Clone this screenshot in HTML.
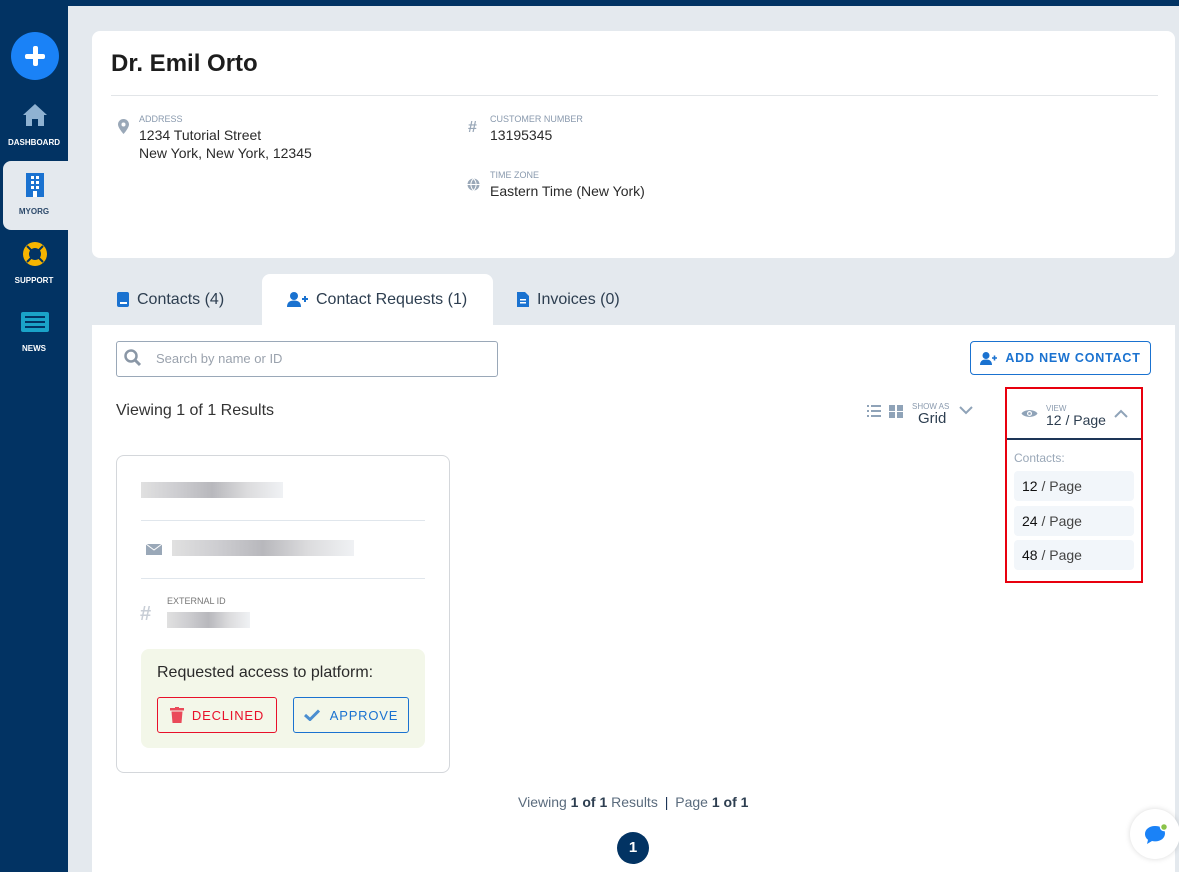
<!DOCTYPE html>
<html><head><meta charset="utf-8"><style>
*{box-sizing:border-box;margin:0;padding:0}
body{width:1179px;height:872px;overflow:hidden;background:#e4e9ee;font-family:"Liberation Sans",sans-serif;position:relative;color:#222}
.abs{position:absolute}
.side{left:0;top:0;width:68px;height:872px;background:#023363}
.top{left:0;top:0;width:1179px;height:6px;background:#023363}
.nav{position:absolute;left:0;width:68px;text-align:center;color:#fff;font-size:8px;font-weight:bold}
.lbl{font-size:9px;color:#8a9aae;text-transform:uppercase}
.val{font-size:14px;color:#2a2a2a;line-height:18px}
.tab{position:absolute;top:274px;height:51px;font-size:16px;color:#2d3e50;display:flex;align-items:center;gap:8px}
.blur{position:absolute;background:linear-gradient(90deg,#ddd,#c8c8cc,#b0b0b5,#d8d8da,#eef0f3);opacity:.9}
.opt{position:absolute;left:1014px;width:120px;height:30px;background:#f2f6fa;border-radius:4px;font-size:14px;padding:7px 8px;color:#444}
.opt b{font-weight:normal;color:#111}
</style></head><body>
<div class="abs side"></div>
<div class="abs top"></div>
<div class="abs" style="left:11px;top:32px;width:48px;height:48px;border-radius:50%;background:#1a82f7"></div>
<div class="abs" style="left:25px;top:54px;width:20px;height:5px;background:#fff;border-radius:2px"></div>
<div class="abs" style="left:33px;top:46px;width:5px;height:20px;background:#fff;border-radius:2px"></div>
<svg class="abs" style="left:22px;top:103px" width="26" height="24" viewBox="0 0 26 24"><path d="M13 1 L1 12 L4 12 L4 23 L10 23 L10 16 L16 16 L16 23 L22 23 L22 12 L25 12Z" fill="#8fb2d2"/></svg>
<div class="nav" style="top:138px">DASHBOARD</div>
<div class="abs" style="left:3px;top:161px;width:65px;height:69px;background:#e4e9ee;border-radius:8px 0 0 8px"></div>
<svg class="abs" style="left:25px;top:173px" width="20" height="24"><rect x="1" y="0" width="18" height="24" fill="#1a72d0"/><g fill="#fff"><rect x="6" y="3" width="3" height="3"/><rect x="11" y="3" width="3" height="3"/><rect x="6" y="8" width="3" height="3"/><rect x="11" y="8" width="3" height="3"/><rect x="6" y="13" width="3" height="3"/><rect x="11" y="13" width="3" height="3"/><rect x="8" y="18" width="4" height="6"/></g></svg>
<div class="nav" style="top:207px;color:#2d4a6b">MYORG</div>
<svg class="abs" style="left:23px;top:242px" width="24" height="24"><circle cx="12" cy="12" r="12" fill="#f7b500"/><circle cx="12" cy="12" r="6" fill="#023363"/><g stroke="#023363" stroke-width="2"><path d="M4 4L8 8M20 4L16 8M4 20L8 16M20 20L16 16"/></g></svg>
<div class="nav" style="top:276px">SUPPORT</div>
<svg class="abs" style="left:21px;top:312px" width="28" height="20"><rect x="0" y="0" width="28" height="20" rx="2" fill="#1aa3c8"/><g fill="#023363"><rect x="4" y="4" width="20" height="2"/><rect x="4" y="9" width="20" height="2"/><rect x="4" y="14" width="20" height="2"/></g></svg>
<div class="nav" style="top:344px">NEWS</div>

<div class="abs" style="left:92px;top:31px;width:1083px;height:227px;background:#fff;border-radius:8px"></div>
<div class="abs" style="left:111px;top:50px;font-size:24px;color:#1d1d1d;font-weight:bold">Dr. Emil Orto</div>
<div class="abs" style="left:111px;top:95px;width:1047px;height:1px;background:#e2e5e8"></div>
<svg class="abs" style="left:118px;top:119px" width="11" height="15" viewBox="0 0 11 15"><path d="M5.5 0C2.5 0 0 2.4 0 5.4 0 9 5.5 15 5.5 15S11 9 11 5.4C11 2.4 8.5 0 5.5 0Z" fill="#9aa8b8"/><circle cx="5.5" cy="5.5" r="2" fill="#fff"/></svg>
<div class="abs lbl" style="left:139px;top:114px">Address</div>
<div class="abs val" style="left:139px;top:126px">1234 Tutorial Street<br>New York, New York, 12345</div>
<div class="abs" style="left:468px;top:119px;font-size:16px;color:#9aa8b8;font-weight:bold">#</div>
<div class="abs lbl" style="left:490px;top:114px">Customer Number</div>
<div class="abs val" style="left:490px;top:126px">13195345</div>
<svg class="abs" style="left:467px;top:178px" width="13" height="13"><circle cx="6.5" cy="6.5" r="6" fill="#9aa8b8"/><path d="M0.5 6.5H12.5M6.5 0.5C3 4 3 9 6.5 12.5M6.5 0.5C10 4 10 9 6.5 12.5" stroke="#fff" fill="none" stroke-width="1"/></svg>
<div class="abs lbl" style="left:490px;top:170px">Time Zone</div>
<div class="abs val" style="left:490px;top:182px">Eastern Time (New York)</div>

<div class="tab" style="left:117px"><svg width="12" height="15"><rect width="12" height="15" rx="2" fill="#1a72d0"/><rect x="3" y="10" width="7" height="2" fill="#fff"/></svg>Contacts (4)</div>
<div class="abs" style="left:262px;top:274px;width:231px;height:52px;background:#fff;border-radius:8px 8px 0 0"></div>
<div class="tab" style="left:287px"><svg width="21" height="15"><circle cx="7" cy="4" r="4" fill="#1a72d0"/><path d="M0 15C0 10 3 8.5 7 8.5S14 10 14 15Z" fill="#1a72d0"/><path d="M15 7H21M18 4V10" stroke="#1a72d0" stroke-width="2"/></svg>Contact Requests (1)</div>
<div class="tab" style="left:517px"><svg width="12" height="15"><path d="M0 0H8L12 4V15H0Z" fill="#1a72d0"/><g fill="#fff"><rect x="3" y="7" width="6" height="1.5"/><rect x="3" y="10" width="6" height="1.5"/></g></svg>Invoices (0)</div>

<div class="abs" style="left:92px;top:325px;width:1083px;height:547px;background:#fff"></div>
<div class="abs" style="left:116px;top:341px;width:382px;height:36px;border:1px solid #9aa8b8;border-radius:3px"></div>
<svg class="abs" style="left:124px;top:349px" width="18" height="18"><circle cx="7" cy="7" r="5.5" stroke="#8a97a6" stroke-width="2.5" fill="none"/><path d="M11 11L16 16" stroke="#8a97a6" stroke-width="3"/></svg>
<div class="abs" style="left:156px;top:351px;font-size:13px;color:#9aa2ad">Search by name or ID</div>
<div class="abs" style="left:970px;top:341px;width:181px;height:34px;border:1px solid #1a72d0;border-radius:4px;display:flex;align-items:center;justify-content:center;gap:8px;font-size:12.5px;font-weight:bold;color:#1a72d0;letter-spacing:.8px"><svg width="17" height="13"><circle cx="6" cy="3.5" r="3.5" fill="#1a72d0"/><path d="M0 13C0 9 2.5 7.5 6 7.5S12 9 12 13Z" fill="#1a72d0"/><path d="M12 6H17M14.5 3.5V8.5" stroke="#1a72d0" stroke-width="1.6"/></svg>ADD NEW CONTACT</div>
<div class="abs" style="left:116px;top:402px;font-size:16px;color:#333">Viewing 1 of 1 Results</div>
<svg class="abs" style="left:867px;top:405px" width="38" height="13"><g fill="#8fa3b8"><rect x="0" y="0" width="2" height="2"/><rect x="4" y="0" width="10" height="2"/><rect x="0" y="5" width="2" height="2"/><rect x="4" y="5" width="10" height="2"/><rect x="0" y="10" width="2" height="2"/><rect x="4" y="10" width="10" height="2"/><rect x="22" y="0" width="6" height="6"/><rect x="30" y="0" width="6" height="6"/><rect x="22" y="7" width="6" height="6"/><rect x="30" y="7" width="6" height="6"/></g></svg>
<div class="abs lbl" style="left:912px;top:402px;font-size:8px">Show As</div>
<div class="abs" style="left:918px;top:410px;font-size:15px;color:#2d3e50">Grid</div>
<svg class="abs" style="left:959px;top:406px" width="14" height="9"><path d="M1 1L7 7L13 1" stroke="#8fa3b8" stroke-width="2" fill="none"/></svg>

<div class="abs" style="left:1005px;top:387px;width:138px;height:196px;border:2px solid #e8000e"></div>
<div class="abs" style="left:1007px;top:438px;width:134px;height:2px;background:#1d3557"></div>
<svg class="abs" style="left:1021px;top:408px" width="17" height="11"><path d="M0.5 5.5C3 1 14 1 16.5 5.5 14 10 3 10 0.5 5.5Z" fill="#8fa3b8"/><circle cx="8.5" cy="5.5" r="2.5" fill="#fff"/><circle cx="8.5" cy="5.5" r="1.3" fill="#8fa3b8"/></svg>
<div class="abs lbl" style="left:1046px;top:404px;font-size:8px">View</div>
<div class="abs" style="left:1046px;top:412px;font-size:14px;color:#2d3e50">12 / Page</div>
<svg class="abs" style="left:1114px;top:409px" width="14" height="9"><path d="M1 8L7 2L13 8" stroke="#8fa3b8" stroke-width="2" fill="none"/></svg>
<div class="abs" style="left:1014px;top:451px;font-size:12px;color:#9aa8b8">Contacts:</div>
<div class="opt" style="top:471px"><b>12</b> / Page</div>
<div class="opt" style="top:506px"><b>24</b> / Page</div>
<div class="opt" style="top:540px"><b>48</b> / Page</div>

<div class="abs" style="left:116px;top:455px;width:334px;height:318px;border:1px solid #d4d7db;border-radius:8px"></div>
<div class="blur" style="left:141px;top:482px;width:142px;height:16px"></div>
<div class="abs" style="left:141px;top:520px;width:284px;height:1px;background:#e0e6ec"></div>
<svg class="abs" style="left:146px;top:544px" width="16" height="11"><rect width="16" height="11" fill="#9aa8b8"/><path d="M0 0L8 6L16 0" stroke="#fff" fill="none"/></svg>
<div class="blur" style="left:172px;top:540px;width:182px;height:16px"></div>
<div class="abs" style="left:141px;top:578px;width:284px;height:1px;background:#e0e6ec"></div>
<div class="abs" style="left:140px;top:603px;font-size:20px;color:#c8ced6;font-weight:bold">#</div>
<div class="abs" style="left:167px;top:596px;font-size:9px;color:#777">EXTERNAL ID</div>
<div class="blur" style="left:167px;top:612px;width:83px;height:16px"></div>
<div class="abs" style="left:141px;top:649px;width:284px;height:99px;background:#f3f7e9;border-radius:8px"></div>
<div class="abs" style="left:157px;top:664px;font-size:16px;color:#2a2a2a">Requested access to platform:</div>
<div class="abs" style="left:157px;top:697px;width:120px;height:36px;border:1px solid #e8102a;border-radius:3px;display:flex;align-items:center;justify-content:center;gap:8px;color:#e8102a;font-size:13px;letter-spacing:.8px"><svg width="14" height="16"><rect x="0" y="1" width="14" height="2.5" fill="#ea4a5a"/><rect x="5" y="0" width="4" height="2" fill="#ea4a5a"/><path d="M1.5 4.5H12.5L11.5 16H2.5Z" fill="#ea4a5a"/></svg>DECLINED</div>
<div class="abs" style="left:293px;top:697px;width:116px;height:36px;border:1px solid #1a72d0;border-radius:3px;display:flex;align-items:center;justify-content:center;gap:10px;color:#1a72d0;font-size:13px;letter-spacing:.8px"><svg width="16" height="12"><path d="M1 6L6 10.5L15 1.5" stroke="#4a8ed0" stroke-width="3" fill="none"/></svg>APPROVE</div>

<div class="abs" style="left:518px;top:794px;font-size:14px;color:#5a6b7d">Viewing <b style="color:#2d3e50">1 of 1</b> Results <span style="color:#1d3557;margin:0 3px">|</span> Page <b style="color:#2d3e50">1 of 1</b></div>
<div class="abs" style="left:617px;top:832px;width:32px;height:32px;border-radius:50%;background:#023363;color:#fff;font-weight:bold;font-size:15px;text-align:center;line-height:32px">1</div>
<div class="abs" style="left:1175px;top:6px;width:4px;height:866px;background:#e4e9ee"></div>
<div class="abs" style="left:1130px;top:809px;width:50px;height:50px;border-radius:50%;background:#fff;box-shadow:0 0 6px rgba(0,0,0,.15)"></div>
<svg class="abs" style="left:1143px;top:822px" width="26" height="24"><path d="M12 4C6 4 2 7.5 2 12c0 2.5 1.3 4.5 3 5.8L4 22l5-3c1 .3 2 .4 3 .4 6 0 10-3.5 10-8S18 4 12 4Z" fill="#1a82f7"/><circle cx="21" cy="5" r="3.5" fill="#8bc34a" stroke="#fff" stroke-width="1.5"/></svg>
</body></html>
